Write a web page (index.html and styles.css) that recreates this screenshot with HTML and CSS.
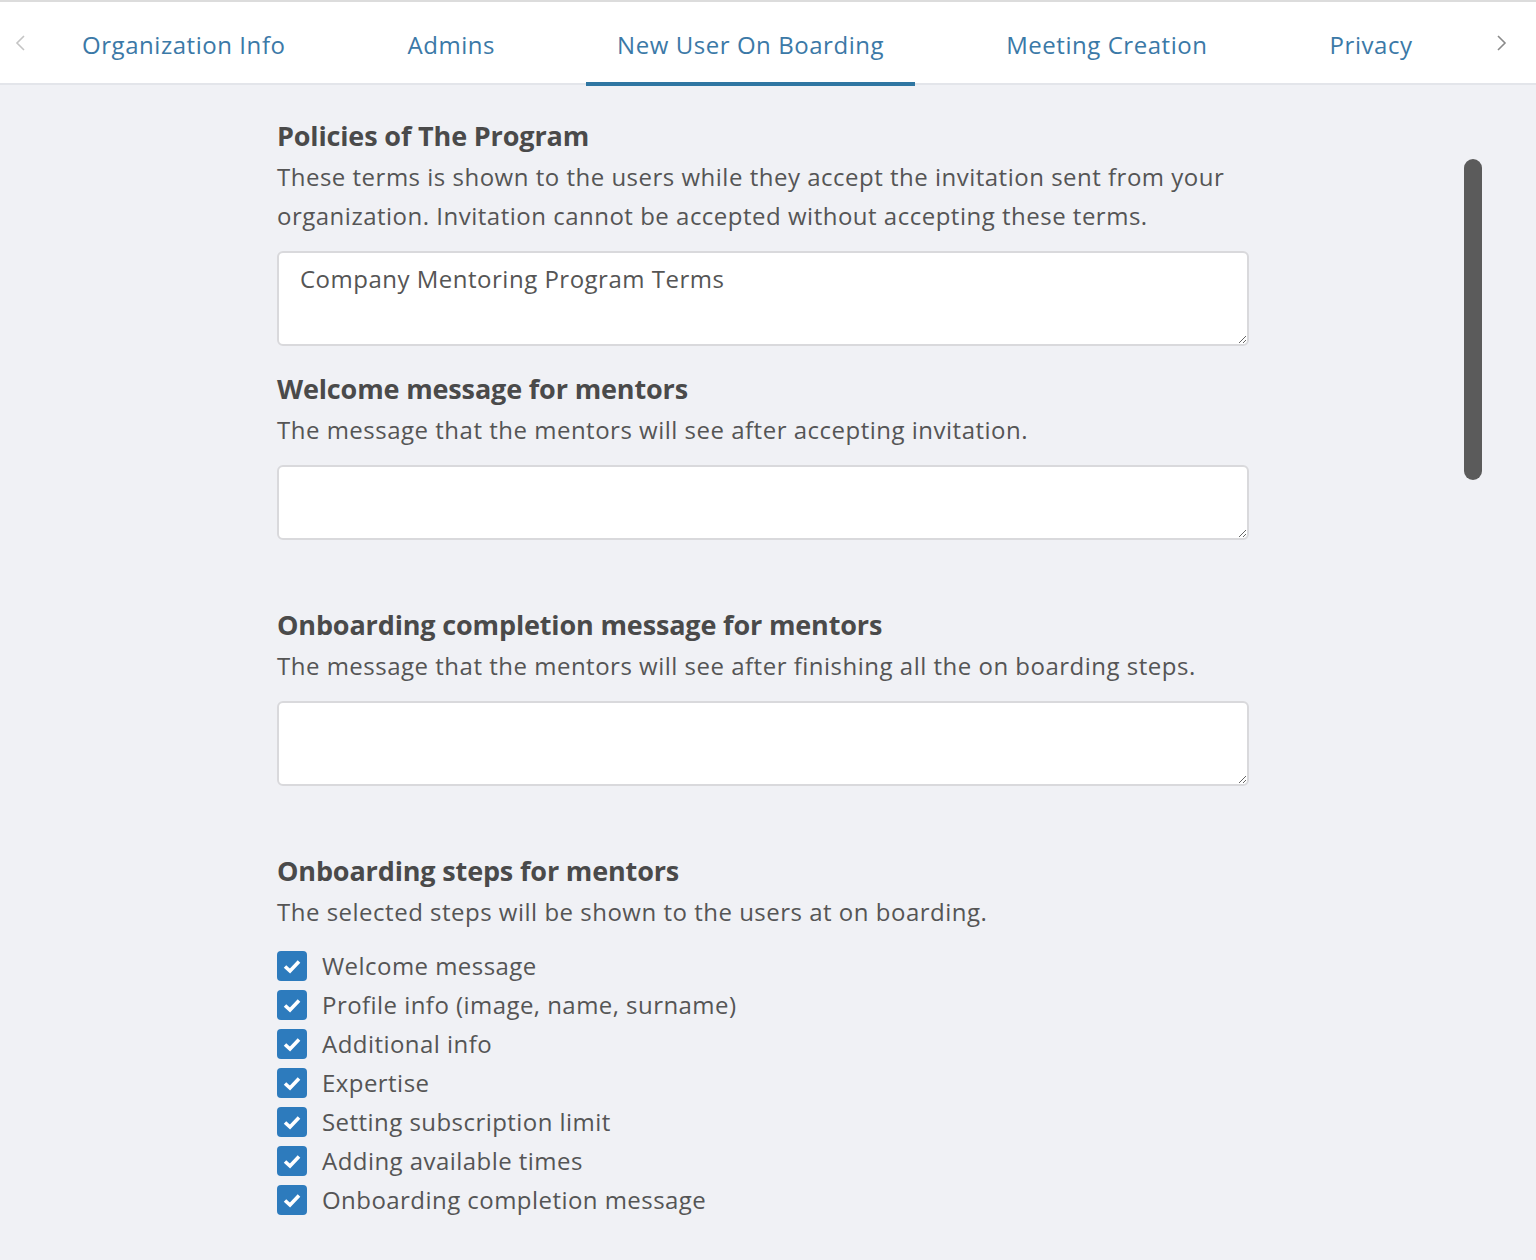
FILE: index.html
```html
<!DOCTYPE html>
<html lang="en">
<head>
<meta charset="utf-8">
<title>New User On Boarding</title>
<link rel="stylesheet" href="styles.css">
</head>
<body>
<nav class="tabbar">
  <button class="arrow arrow-left" aria-label="Previous">
    <svg width="14" height="18" viewBox="0 0 14 18"><path d="M10 2 L3 9 L10 16" fill="none" stroke="#c4c4c4" stroke-width="1.6"/></svg>
  </button>
  <div class="tabs">
    <a class="tab">Organization Info</a>
    <a class="tab">Admins</a>
    <a class="tab active">New User On Boarding</a>
    <a class="tab">Meeting Creation</a>
    <a class="tab">Privacy</a>
  </div>
  <button class="arrow arrow-right" aria-label="Next">
    <svg width="14" height="18" viewBox="0 0 14 18"><path d="M4 2 L11 9 L4 16" fill="none" stroke="#8a8a8a" stroke-width="1.6"/></svg>
  </button>
</nav>

<main class="content">
  <section class="field">
    <h2 class="title">Policies of The Program</h2>
    <p class="desc">These terms is shown to the users while they accept the invitation sent from your organization. Invitation cannot be accepted without accepting these terms.</p>
    <textarea class="input input-terms">Company Mentoring Program Terms</textarea>
  </section>

  <section class="field">
    <h2 class="title">Welcome message for mentors</h2>
    <p class="desc">The message that the mentors will see after accepting invitation.</p>
    <textarea class="input input-welcome"></textarea>
  </section>

  <section class="field field-spaced">
    <h2 class="title">Onboarding completion message for mentors</h2>
    <p class="desc">The message that the mentors will see after finishing all the on boarding steps.</p>
    <textarea class="input input-completion"></textarea>
  </section>

  <section class="field field-spaced">
    <h2 class="title">Onboarding steps for mentors</h2>
    <p class="desc">The selected steps will be shown to the users at on boarding.</p>
    <ul class="checks">
      <li class="check"><span class="box"><svg width="20" height="16" viewBox="0 0 20 16"><path d="M3 8.5 L8 13 L17 3.5" fill="none" stroke="#fff" stroke-width="3.6"/></svg></span>Welcome message</li>
      <li class="check"><span class="box"><svg width="20" height="16" viewBox="0 0 20 16"><path d="M3 8.5 L8 13 L17 3.5" fill="none" stroke="#fff" stroke-width="3.6"/></svg></span>Profile info (image, name, surname)</li>
      <li class="check"><span class="box"><svg width="20" height="16" viewBox="0 0 20 16"><path d="M3 8.5 L8 13 L17 3.5" fill="none" stroke="#fff" stroke-width="3.6"/></svg></span>Additional info</li>
      <li class="check"><span class="box"><svg width="20" height="16" viewBox="0 0 20 16"><path d="M3 8.5 L8 13 L17 3.5" fill="none" stroke="#fff" stroke-width="3.6"/></svg></span>Expertise</li>
      <li class="check"><span class="box"><svg width="20" height="16" viewBox="0 0 20 16"><path d="M3 8.5 L8 13 L17 3.5" fill="none" stroke="#fff" stroke-width="3.6"/></svg></span>Setting subscription limit</li>
      <li class="check"><span class="box"><svg width="20" height="16" viewBox="0 0 20 16"><path d="M3 8.5 L8 13 L17 3.5" fill="none" stroke="#fff" stroke-width="3.6"/></svg></span>Adding available times</li>
      <li class="check"><span class="box"><svg width="20" height="16" viewBox="0 0 20 16"><path d="M3 8.5 L8 13 L17 3.5" fill="none" stroke="#fff" stroke-width="3.6"/></svg></span>Onboarding completion message</li>
    </ul>
  </section>
</main>

<div class="scrollthumb"></div>
</body>
</html>
```

FILE: styles.css
```css
* { box-sizing: border-box; }

html, body {
  margin: 0;
  padding: 0;
}

body {
  background: #f0f1f5;
  font-family: "Open Sans", "Noto Sans", sans-serif;
  color: #4f4f4f;
  min-height: 1260px;
  position: relative;
}

.tabbar {
  display: flex;
  align-items: center;
  height: 85px;
  background: #ffffff;
  border-top: 2px solid #dcdcdc;
  border-bottom: 2px solid #e3e5ea;
}

.arrow {
  border: 0;
  background: transparent;
  padding: 0;
  width: 40px;
  height: 40px;
  display: flex;
  align-items: center;
  justify-content: center;
  cursor: pointer;
}

.arrow-left { margin-left: 1px; margin-right: 10px; }
.arrow-right { margin-left: auto; margin-right: 15px; }

.tabs {
  display: flex;
  align-self: stretch;
  gap: 60px;
}

.tab {
  display: flex;
  align-items: center;
  padding: 5px 31px 0;
  font-size: 24px;
  color: #3b79a7;
  border-bottom: 4px solid transparent;
  margin-bottom: -3px;
  white-space: nowrap;
  letter-spacing: 0.55px;
}

.tab.active {
  border-bottom-color: #2f76a2;
}

.content {
  width: 972px;
  margin-left: 277px;
  padding-top: 30px;
  padding-bottom: 40px;
}

.field-spaced { margin-top: 64px; }
.field + .field:not(.field-spaced) { margin-top: 22px; }

.title {
  margin: 0 0 1px;
  font-size: 27px;
  line-height: 41px;
  font-weight: 700;
  color: #4a4a4a;
  letter-spacing: -0.15px;
}

.desc {
  margin: 0 0 16px;
  font-size: 24px;
  line-height: 39px;
  color: #555555;
  letter-spacing: 0.5px;
}

.input {
  display: block;
  width: 100%;
  background: #ffffff;
  border: 2px solid #d9d9dc;
  border-radius: 6px;
  padding: 6px 21px;
  font-family: inherit;
  font-size: 24px;
  line-height: 39px;
  color: #555555;
  resize: vertical;
  outline: none;
  letter-spacing: 0.5px;
}

.input-terms { height: 95px; }
.input-welcome { height: 75px; }
.input-completion { height: 85px; }

.checks {
  list-style: none;
  margin: -1px 0 0;
  padding: 0;
}

.check {
  display: flex;
  align-items: center;
  height: 39px;
  font-size: 24px;
  color: #555555;
  letter-spacing: 0.45px;
}

.box {
  width: 30px;
  height: 30px;
  border-radius: 4px;
  background: #2d7bbd;
  display: flex;
  align-items: center;
  justify-content: center;
  margin-right: 15px;
  flex: none;
}

.scrollthumb {
  position: absolute;
  left: 1464px;
  top: 159px;
  width: 18px;
  height: 321px;
  border-radius: 9px;
  background: #5b5b5b;
}
```
